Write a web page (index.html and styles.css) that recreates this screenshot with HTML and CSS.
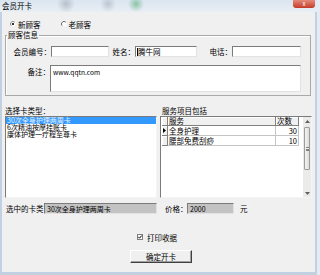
FILE: index.html
```html
<!DOCTYPE html>
<html lang="zh-CN">
<head>
  <meta charset="UTF-8" />
  <title>会员开卡</title>
  <link rel="stylesheet" href="styles.css">
</head>
<body>

  <div class="titlebar">
    <span class="title">会员开卡</span>
    <span class="close">x</span>
  </div>

  <div class="window">
    <!-- Customer type -->
    <div class="radio-row">
      <label class="radio">
        <svg width="6" height="6" viewBox="0 0 6 6"><circle cx="3" cy="3" r="2.5" fill="#fff"/><path d="M4.77 1.23A2.5 2.5 0 0 0 1.23 4.77" stroke="#8a8a8a" fill="none"/><circle cx="3" cy="3" r="1.1" fill="#000"/></svg>
        新顾客
      </label>
      <label class="radio second">
        <svg width="6" height="6" viewBox="0 0 6 6"><circle cx="3" cy="3" r="2.5" fill="#fff"/><path d="M4.77 1.23A2.5 2.5 0 0 0 1.23 4.77" stroke="#6a6a6a" fill="none"/></svg>
        老顾客
      </label>
    </div>

    <!-- Customer info -->
    <fieldset class="group">
      <legend>顾客信息</legend>
      <div class="row">
        <span class="lbl w41">会员编号：</span>
        <span class="edit w58"></span>
        <span class="lbl w26">姓名：</span>
        <span class="edit w62"><i class="caret"></i>腾牛网</span>
        <span class="lbl w35">电话：</span>
        <span class="edit w69"></span>
      </div>
      <div class="row memo-row">
        <span class="lbl w40 memo-lbl">备注：</span>
        <div class="edit memo">www.qqtn.com</div>
      </div>
    </fieldset>

    <!-- Card type / services -->
    <div class="panes">
      <div class="pane">
        <div class="cap">选择卡类型：</div>
        <ul class="listbox">
          <li class="sel">30次全身护理两周卡</li>
          <li>6次精油按摩挂账卡</li>
          <li>康体护理一疗程至尊卡</li>
        </ul>
      </div>
      <div class="pane">
        <div class="cap right-cap">服务项目包括</div>
        <div class="grid">
          <div class="table">
            <div class="hd"></div>
            <div class="hd">服务</div>
            <div class="hd">次数</div>
            <div class="ind"><svg width="3" height="5" viewBox="0 0 3 5"><polygon points="0,0 3,2.5 0,5" fill="#000"/></svg></div>
            <div class="cell">全身护理</div>
            <div class="cell num">30</div>
            <div class="ind"></div>
            <div class="cell">腰部免费刮痧</div>
            <div class="cell num">10</div>
          </div>
          <div class="spacer"></div>
          <div class="vscroll">
            <div class="sbtn"><svg width="5" height="3" viewBox="0 0 5 3"><polygon points="0,3 2.5,0 5,3" fill="#606060"/></svg></div>
            <div class="track">
              <div class="thumb"><span class="grip"></span></div>
            </div>
            <div class="sbtn"><svg width="5" height="3" viewBox="0 0 5 3"><polygon points="0,0 5,0 2.5,3" fill="#606060"/></svg></div>
          </div>
        </div>
      </div>
    </div>

    <!-- Selected card -->
    <div class="sel-row">
      <span class="lbl-card">选中的卡类</span>
      <span class="edit ro w113">30次全身护理两周卡</span>
      <span class="lbl-price">价格：</span>
      <span class="edit ro w47">2000</span>
      <span class="unit">元</span>
    </div>

    <div class="print-row">
      <svg width="6" height="6" viewBox="0 0 6 6"><rect x="0.5" y="0.5" width="5" height="5" fill="#fff" stroke="#808080"/><path d="M1.3 2.8L2.5 4.2L4.8 1.5" stroke="#000" stroke-width="1" fill="none"/></svg>
      <span>打印收据</span>
    </div>

    <div class="btn-row">
      <button type="button" class="btn">确定开卡</button>
    </div>
  </div>

</body>
</html>
```

FILE: styles.css
```css
* {
  box-sizing: border-box;
}
body {
  margin: 0;
  width: 320px;
  height: 275px;
  overflow: hidden;
  background: #e4ebf2;
  font-family: "Noto Sans CJK SC", "Liberation Sans", sans-serif;
  font-size: 7.5px;
  color: #000;
}

/* Title bar */
.titlebar {
  width: 317px;
  height: 12px;
  display: flex;
  justify-content: space-between;
  padding-left: 2px;
  background:
    radial-gradient(circle at 66px 4px, rgba(110, 120, 130, 0.35), transparent 9px),
    radial-gradient(circle at 108px 4px, rgba(110, 120, 130, 0.3), transparent 8px),
    radial-gradient(circle at 136px 4px, rgba(40, 150, 70, 0.45), transparent 8px),
    linear-gradient(#dbe5f0, #e8eef5);
}
.title {
  line-height: 11px;
}
.close {
  width: 22px;
  height: 8px;
  margin-right: 2px;
  background: linear-gradient(#e58a7a, #c43a28);
  border-radius: 0 0 3px 3px;
  color: #fff;
  font-size: 6px;
  line-height: 7px;
  text-align: center;
}

/* Window body */
.window {
  width: 317px;
  height: 263px;
  background: #f0f0f0;
  border: solid #c2d1e2;
  border-width: 0 2px 3px 2px;
  padding: 0 3px;
  display: flex;
  flex-direction: column;
}

.radio-row {
  margin-top: 7px;
  height: 10px;
  display: flex;
  align-items: center;
  padding-left: 5px;
}
.radio {
  display: flex;
  align-items: center;
  gap: 2px;
}
.radio.second {
  margin-left: 20px;
}

/* Group box */
.group {
  margin: 2px 1px 0 0;
  padding: 7px 0 3px 0;
  border: 1px solid #a9a9a9;
  box-shadow: inset 1px 1px 0 #fff;
}
.group legend {
  margin-left: 1px;
  padding: 0 1px;
  line-height: 8px;
}
.row {
  display: flex;
  align-items: center;
  height: 11px;
  padding-left: 4px;
}
.memo-row {
  margin-top: 8px;
  height: 27px;
  align-items: flex-start;
}
.memo-lbl {
  padding-top: 1px;
}
.lbl {
  text-align: right;
  white-space: nowrap;
}
.w26 { width: 26px; }
.w35 { width: 35px; }
.w40 { width: 40px; }
.w41 { width: 41px; }
.w47 { width: 47px; }
.w58 { width: 58px; }
.w62 { width: 62px; }
.w69 { width: 69px; }
.w113 { width: 113px; }

.edit {
  display: flex;
  align-items: center;
  height: 11px;
  background: #fff;
  border: 1px solid;
  border-color: #7b7b7b #e2e2e2 #e2e2e2 #7b7b7b;
  padding-left: 1px;
  white-space: nowrap;
  overflow: hidden;
}
.caret {
  width: 1px;
  height: 8px;
  background: #000;
}
.memo {
  width: 251px;
  height: 27px;
  align-items: flex-start;
  padding: 1px 2px;
  font-size: 6.6px;
}

/* Card list and service grid */
.panes {
  display: flex;
  gap: 3px;
  margin-top: 11px;
}
.pane {
  width: 152px;
  display: flex;
  flex-direction: column;
}
.cap {
  height: 9px;
  line-height: 8px;
}
.right-cap {
  padding-left: 2px;
}
.listbox {
  height: 82px;
  margin: 0;
  padding: 0;
  list-style: none;
  background: #fff;
  border: 1px solid;
  border-color: #7b7b7b #f4f4f4 #f4f4f4 #7b7b7b;
  font-size: 7px;
}
.listbox li {
  height: 7px;
  line-height: 7px;
  padding-left: 1px;
  white-space: nowrap;
}
.listbox li.sel {
  background: #3399ff;
  color: #eaf3ff;
}

.grid {
  height: 82px;
  display: flex;
  background: #fff;
  border: 1px solid;
  border-color: #7b7b7b #f4f4f4 #f4f4f4 #7b7b7b;
}
.table {
  align-self: flex-start;
  display: grid;
  grid-template-columns: 6px 108px 23px;
  grid-template-rows: 9px 10px 10px;
  margin-left: 1px;
}
.hd,
.ind {
  background: #f0f0f0;
  border-right: 1px solid #808080;
  border-bottom: 1px solid #808080;
  box-shadow: inset 1px 1px 0 #fff;
  line-height: 8px;
  padding-left: 1px;
}
.ind {
  display: flex;
  align-items: center;
}
.cell {
  border-right: 1px solid #c4c4c4;
  border-bottom: 1px solid #c4c4c4;
  line-height: 9px;
  padding: 0 1px;
  white-space: nowrap;
}
.num {
  text-align: right;
}
.spacer {
  flex: 1;
}
.vscroll {
  width: 8px;
  display: flex;
  flex-direction: column;
  background: #ebebeb;
}
.sbtn {
  height: 8px;
  display: flex;
  align-items: center;
  justify-content: center;
}
.track {
  flex: 1;
  padding-top: 2px;
}
.thumb {
  height: 43px;
  margin: 0 1px;
  border: 1px solid #9c9c9c;
  border-radius: 1px;
  background: linear-gradient(90deg, #f4f4f4, #dcdcdc);
  display: flex;
  align-items: center;
  justify-content: center;
}
.grip {
  width: 3px;
  height: 4px;
  border-top: 1px solid #808080;
  border-bottom: 1px solid #808080;
  background: linear-gradient(#f4f4f4 1px, #808080 1px, #808080 2px, #f4f4f4 2px);
}

/* Selected card row */
.sel-row {
  display: flex;
  align-items: center;
  height: 11px;
  margin-top: 5px;
}
.lbl-card {
  width: 39px;
  padding-left: 1px;
  white-space: nowrap;
}
.edit.ro {
  background: #c3c3c3;
  font-size: 7px;
  padding-left: 2px;
}
.lbl-price {
  width: 22px;
  margin-left: 8px;
  white-space: nowrap;
}
.unit {
  margin-left: 6px;
}

.print-row {
  display: flex;
  align-items: center;
  gap: 4px;
  height: 8px;
  margin-top: 19px;
  padding-left: 132px;
}

.btn-row {
  margin-top: 9px;
  padding-left: 125px;
}
.btn {
  width: 62px;
  height: 13px;
  padding: 0;
  background: #f0f0f0;
  border: 1px solid;
  border-color: #fff #404040 #404040 #fff;
  box-shadow: inset -1px -1px 0 #a0a0a0;
  font-family: inherit;
  font-size: 7.5px;
  color: #000;
}
```
